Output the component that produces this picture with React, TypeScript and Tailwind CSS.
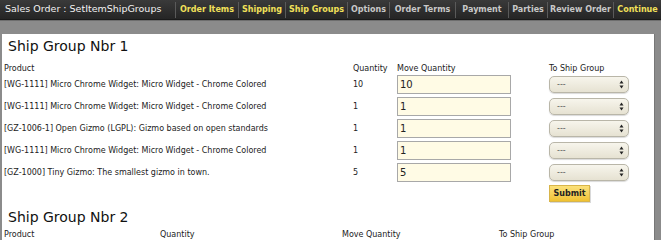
import React from 'react'

const font = { fontFamily: '"DejaVu Sans", Verdana, sans-serif' }

const navItems = [
  { label: 'Order Items', hot: true, w: 'w-[63px]' },
  { label: 'Shipping', hot: true, w: 'w-[47px]' },
  { label: 'Ship Groups', hot: true, w: 'w-[62px]' },
  { label: 'Options', hot: false, w: 'w-[42px]' },
  { label: 'Order Terms', hot: false, w: 'w-[66px]' },
  { label: 'Payment', hot: false, w: 'w-[53px]' },
  { label: 'Parties', hot: false, w: 'w-[39px]' },
  { label: 'Review Order', hot: false, w: 'w-[66px]' },
  { label: 'Continue', hot: true, w: 'w-[48px]' },
]

const rows = [
  { product: '[WG-1111] Micro Chrome Widget: Micro Widget - Chrome Colored', qty: '10' },
  { product: '[WG-1111] Micro Chrome Widget: Micro Widget - Chrome Colored', qty: '1' },
  { product: '[GZ-1006-1] Open Gizmo (LGPL): Gizmo based on open standards', qty: '1' },
  { product: '[WG-1111] Micro Chrome Widget: Micro Widget - Chrome Colored', qty: '1' },
  { product: '[GZ-1000] Tiny Gizmo: The smallest gizmo in town.', qty: '5' },
]

const ShipSelect = () => (
  <div className="flex h-[17px] w-[80px] items-center justify-between rounded-[5px] border border-[#b9b6a8] bg-gradient-to-b from-[#f7f5ec] to-[#e6e2d2] pl-[7px] pr-[4px] shadow-[0_1px_1px_rgba(0,0,0,0.15)]">
    <span className="text-[8px] leading-none text-[#555]">---</span>
    <svg width="5" height="9" viewBox="0 0 5 9">
      <path d="M2.5 0.5 L4.5 3.5 L0.5 3.5 Z" fill="#222" />
      <path d="M2.5 8.5 L4.5 5.5 L0.5 5.5 Z" fill="#222" />
    </svg>
  </div>
)

export default function App() {
  return (
    <div className="h-[240px] w-[661px] overflow-hidden bg-[#8b8b8b]" style={font}>
      <div className="flex h-[20px] items-center border-b border-[#1a1a1a] bg-gradient-to-b from-[#3a3a3a] to-[#252525]">
        <div className="w-[175px] whitespace-nowrap pl-[5px] text-[9.5px] text-[#f2f2f2]">Sales Order : SetItemShipGroups</div>
        {navItems.map((item) => (
          <div
            key={item.label}
            className={`flex h-[16px] items-center justify-center whitespace-nowrap border-l border-[#5a5a5a] text-[8px] font-bold ${item.w} ${
              item.hot ? 'text-[#f1e05a]' : 'text-[#c8c8c8]'
            }`}
          >
            {item.label}
          </div>
        ))}
      </div>
      <div className="h-[14px] border-t border-[#6e6e6e] bg-[#8b8b8b]" />
      <div className="ml-[2px] mr-[6px] h-[206px] border-r border-[#777] bg-white pl-[2px] text-[8px] text-[#222]">
        <h2 className="pl-[4px] pt-[3px] text-[14px] leading-[18px] text-[#111]">Ship Group Nbr 1</h2>
        <div className="mt-[9px] grid grid-cols-[349px_44px_152px_1fr] items-center">
          <div className="leading-[10px]">Product</div>
          <div className="leading-[10px]">Quantity</div>
          <div className="leading-[10px]">Move Quantity</div>
          <div className="leading-[10px]">To Ship Group</div>
        </div>
        <div className="mt-[1px] flex flex-col gap-[4px]">
          {rows.map((r, i) => (
            <div key={i} className="grid h-[18px] grid-cols-[349px_44px_152px_1fr] items-center">
              <div>{r.product}</div>
              <div>{r.qty}</div>
              <div>
                <div className="flex h-[19px] w-[114px] items-center border border-[#a8a8a8] bg-[#fffbe5] pl-[2px] text-[10px]">
                  {r.qty}
                </div>
              </div>
              <div>
                <ShipSelect />
              </div>
            </div>
          ))}
        </div>
        <div className="mt-[4px] grid grid-cols-[545px_1fr]">
          <div />
          <div>
            <button className="h-[17px] w-[41px] border border-[#d8b54a] bg-gradient-to-b from-[#fbe17a] to-[#f0c230] text-[8px] font-bold text-[#222] shadow-[1px_1px_0_rgba(0,0,0,0.15)]">
              Submit
            </button>
          </div>
        </div>
        <h2 className="mt-[6px] pl-[4px] text-[14px] leading-[18px] text-[#111]">Ship Group Nbr 2</h2>
        <div className="mt-[4px] grid grid-cols-[156px_182px_157px_1fr] items-center">
          <div className="leading-[10px]">Product</div>
          <div className="leading-[10px]">Quantity</div>
          <div className="leading-[10px]">Move Quantity</div>
          <div className="leading-[10px]">To Ship Group</div>
        </div>
      </div>
    </div>
  )
}
